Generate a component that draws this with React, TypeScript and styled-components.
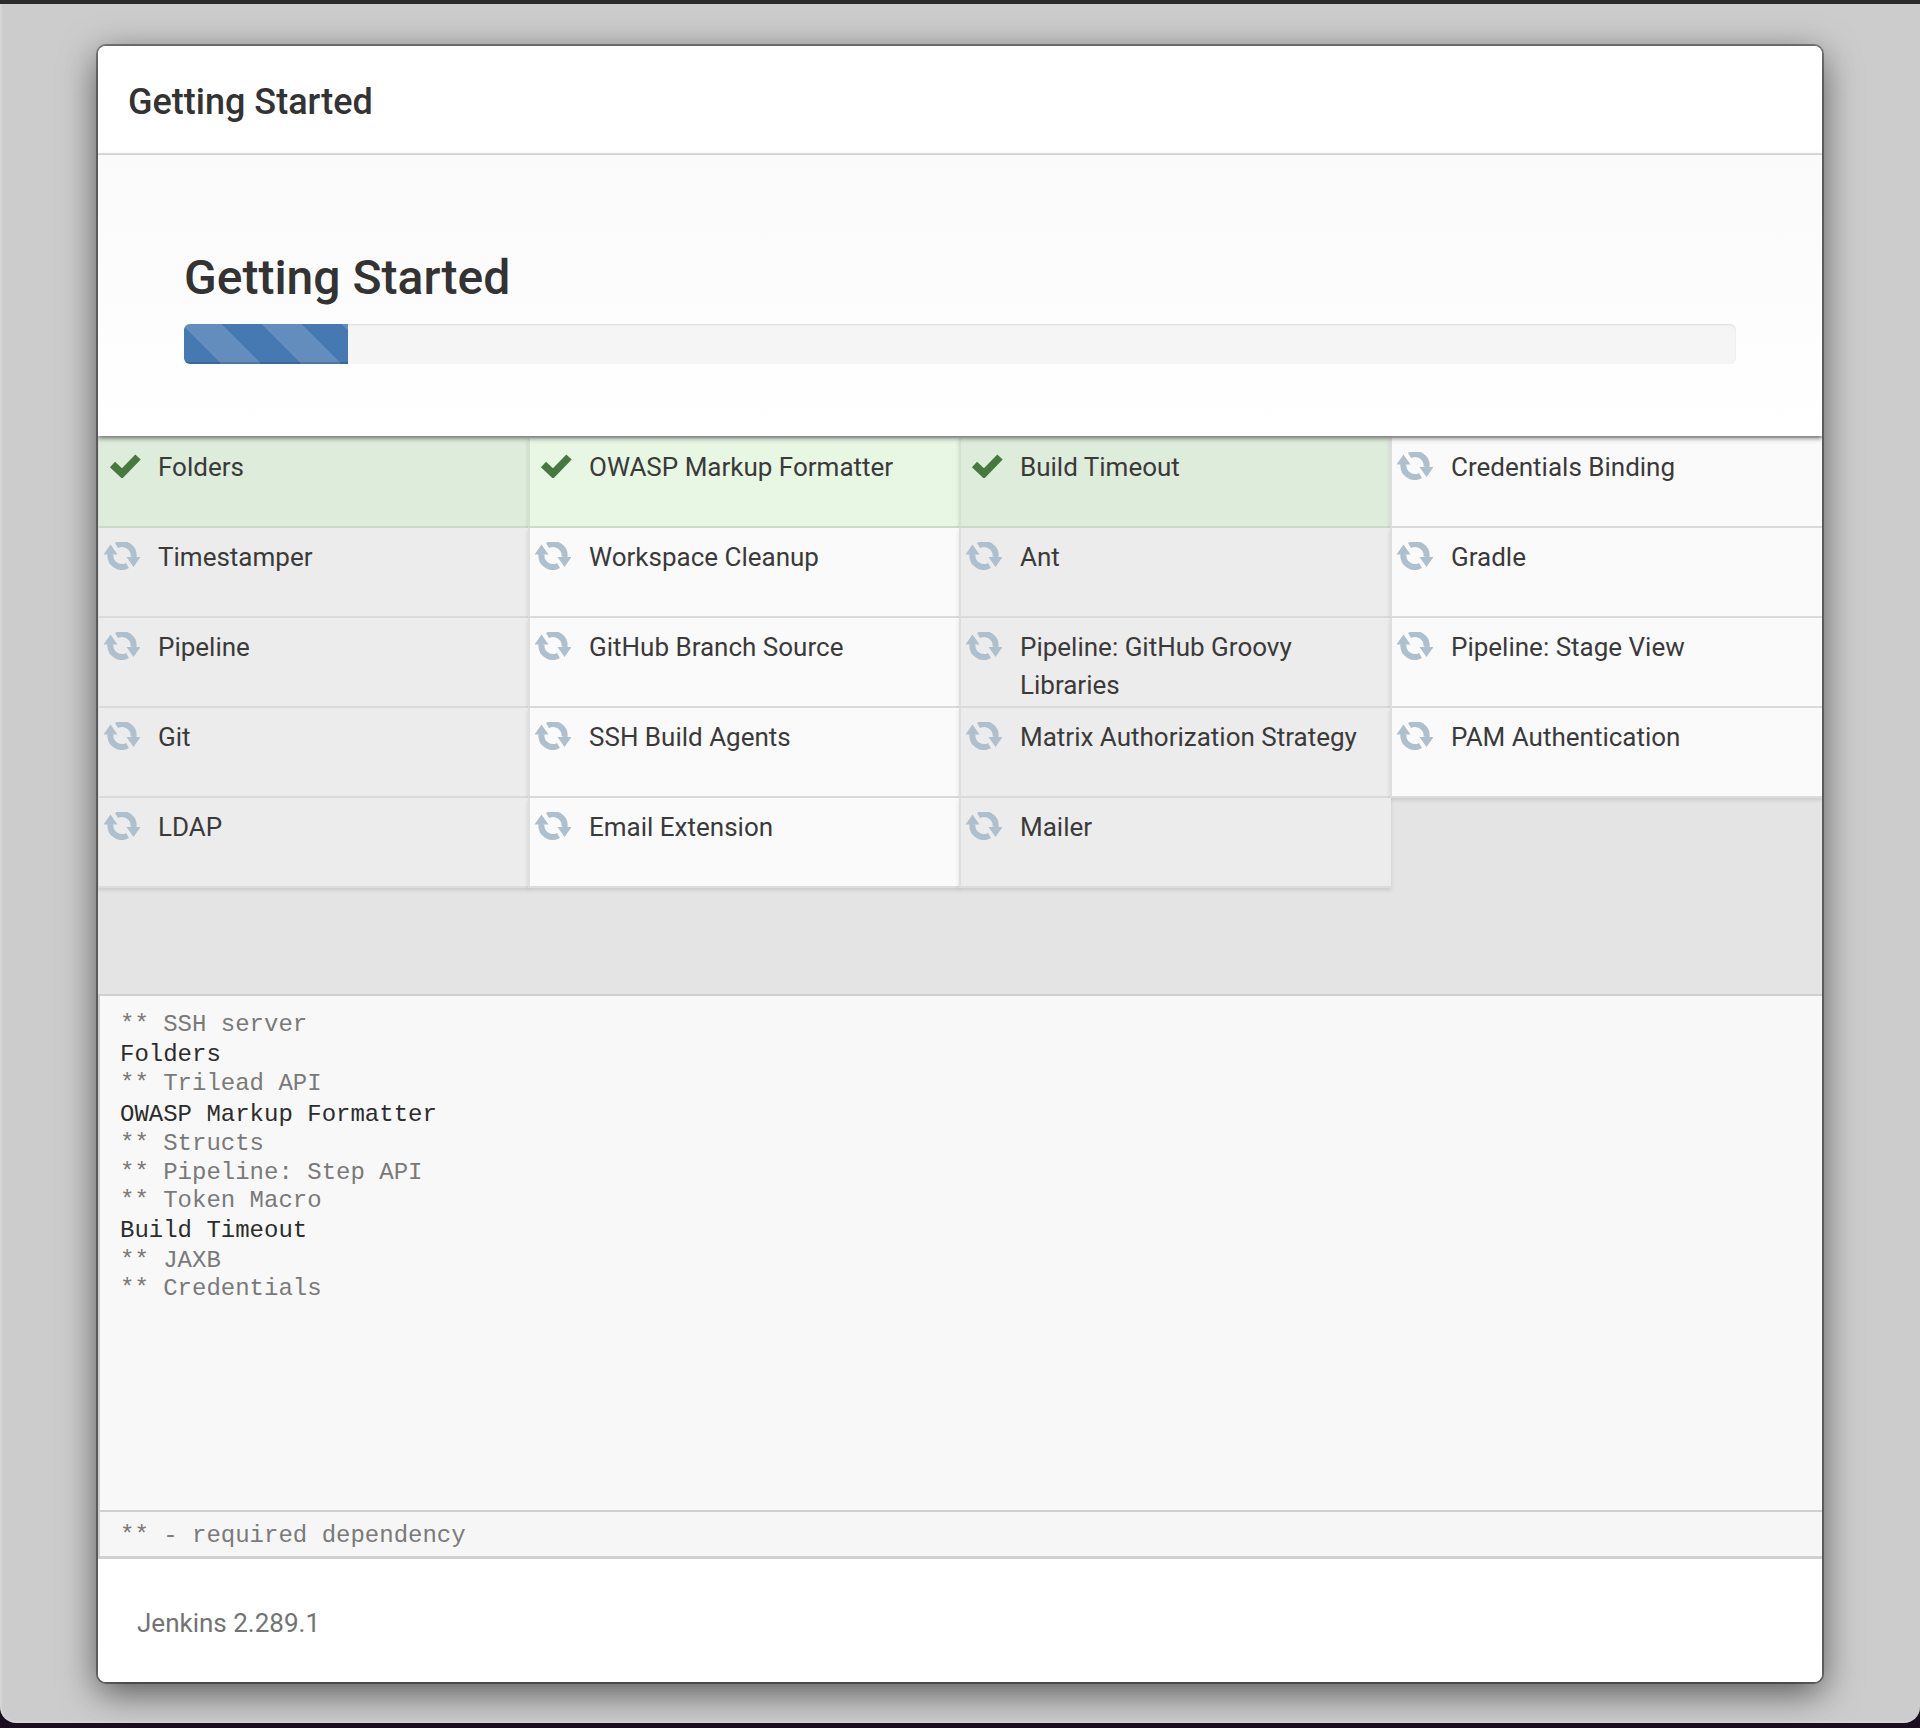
import React from 'react'
import styled, { createGlobalStyle } from 'styled-components'

type PluginState = 'done' | 'pending'

type Plugin = {
  name: string
  state: PluginState
}

const plugins: Plugin[] = [
  { name: 'Folders', state: 'done' },
  { name: 'OWASP Markup Formatter', state: 'done' },
  { name: 'Build Timeout', state: 'done' },
  { name: 'Credentials Binding', state: 'pending' },
  { name: 'Timestamper', state: 'pending' },
  { name: 'Workspace Cleanup', state: 'pending' },
  { name: 'Ant', state: 'pending' },
  { name: 'Gradle', state: 'pending' },
  { name: 'Pipeline', state: 'pending' },
  { name: 'GitHub Branch Source', state: 'pending' },
  { name: 'Pipeline: GitHub Groovy Libraries', state: 'pending' },
  { name: 'Pipeline: Stage View', state: 'pending' },
  { name: 'Git', state: 'pending' },
  { name: 'SSH Build Agents', state: 'pending' },
  { name: 'Matrix Authorization Strategy', state: 'pending' },
  { name: 'PAM Authentication', state: 'pending' },
  { name: 'LDAP', state: 'pending' },
  { name: 'Email Extension', state: 'pending' },
  { name: 'Mailer', state: 'pending' },
]

const logLines = [
  '** SSH server',
  'Folders',
  '** Trilead API',
  'OWASP Markup Formatter',
  '** Structs',
  '** Pipeline: Step API',
  '** Token Macro',
  'Build Timeout',
  '** JAXB',
  '** Credentials',
]

const GlobalStyle = createGlobalStyle`
  html, body {
    margin: 0;
    padding: 0;
    background: #1a0f20;
  }
  * {
    box-sizing: border-box;
  }
`

const cellBackground = (state: PluginState, index: number) => {
  const odd = index % 2 === 1
  if (state === 'done') return odd ? '#e8f6e4' : '#deecdb'
  return odd ? '#fafafa' : '#ececec'
}

const Page = styled.div`
  height: 1728px;
  display: flex;
  flex-direction: column;
  font-family: Roboto, 'Liberation Sans', sans-serif;
  color: #333;
`

const TopBar = styled.div`
  height: 4px;
  flex: none;
  background: #2b2b2b;
`

const Backdrop = styled.div`
  height: 1719px;
  flex: none;
  padding: 42px 98px 0 96px;
  background: #cccccc;
  border-left: 2px solid #d6d6d6;
  border-bottom: 2px solid #d4d4d4;
  border-radius: 0 0 16px 16px;
`

const Modal = styled.div`
  height: 1636px;
  display: flex;
  flex-direction: column;
  overflow: hidden;
  background: #fff;
  border-radius: 8px;
  box-shadow: 0 0 0 2px rgba(0, 0, 0, 0.38), 0 10px 36px rgba(0, 0, 0, 0.6);
`

const ModalHeader = styled.header`
  height: 109px;
  flex: none;
  display: flex;
  align-items: center;
  padding: 6px 30px 0;
  background: #fff;
  border-bottom: 2px solid #e6e6e6;
`

const ModalTitle = styled.h4`
  margin: 0;
  font-size: 36px;
  font-weight: 500;
  line-height: 1.2;
`

const Body = styled.div`
  flex: 1;
  display: flex;
  flex-direction: column;
  min-height: 0;
`

const ProgressSection = styled.section`
  position: relative;
  z-index: 2;
  height: 281px;
  flex: none;
  padding: 93px 86px 0;
  background: linear-gradient(#fafafa, #ffffff);
  box-shadow: 0 2px 5px rgba(0, 0, 0, 0.55);
`

const Heading = styled.h1`
  margin: 0 0 17px;
  font-size: 48px;
  font-weight: 500;
  line-height: 59px;
`

const ProgressTrack = styled.div`
  height: 40px;
  overflow: hidden;
  background: #f5f5f5;
  border-radius: 6px;
  box-shadow: inset 0 1px 2px rgba(0, 0, 0, 0.1);
`

const ProgressBar = styled.div`
  height: 100%;
  background-color: #4679b2;
  background-image: linear-gradient(
    45deg,
    rgba(255, 255, 255, 0.15) 25%,
    transparent 25%,
    transparent 50%,
    rgba(255, 255, 255, 0.15) 50%,
    rgba(255, 255, 255, 0.15) 75%,
    transparent 75%,
    transparent
  );
  background-size: 80px 80px;
  background-position: -2px 0;
  box-shadow: inset 0 -2px 0 rgba(0, 0, 0, 0.15);
`

const InstallArea = styled.section`
  height: 558px;
  flex: none;
  background: #e4e4e4;
`

const PluginGrid = styled.div`
  display: grid;
  grid-template-columns: repeat(4, 1fr);
  grid-auto-rows: 90px;
  padding-top: 2px;
`

const Cell = styled.div<{ $state: PluginState; $index: number }>`
  display: flex;
  margin-left: -1px;
  padding-top: 10px;
  font-size: 26px;
  line-height: 38px;
  color: #3a3a3a;
  background: ${(p) => cellBackground(p.$state, p.$index)};
  border-bottom: 2px solid ${(p) => (p.$state === 'done' ? '#cddccb' : '#dcdcdc')};
  border-left: 2px solid ${(p) => (p.$state === 'done' ? '#d3e2d0' : '#dedede')};
  box-shadow: 0 2px 4px rgba(0, 0, 0, 0.12);
`

const IconSlot = styled.div`
  width: 59px;
  flex: none;
  padding-left: 4px;
  color: #aebfce;
`

const CheckSlot = styled(IconSlot)`
  padding-left: 10px;
  color: #47783f;
`

const CellName = styled.span`
  display: block;
`

const LogPane = styled.section`
  height: 516px;
  flex: none;
  padding: 14.5px 20px 0;
  background: #f8f8f8;
  border-top: 2px solid #cfcfcf;
  border-left: 2px solid #d0d0d0;
  font-family: 'Liberation Mono', monospace;
  font-size: 24px;
`

const DepLine = styled.div`
  height: 28.3px;
  line-height: 28.3px;
  color: #7a7a7a;
`

const PluginLine = styled.div`
  height: 31.7px;
  line-height: 31.7px;
  color: #2c2c2c;
`

const Legend = styled.section`
  height: 49px;
  flex: none;
  display: flex;
  align-items: center;
  padding: 2px 20px 0;
  background: #f6f6f6;
  border-top: 2px solid #cfcfcf;
  border-bottom: 3px solid #d0d0d0;
  border-left: 2px solid #d0d0d0;
  font-family: 'Liberation Mono', monospace;
  font-size: 24px;
  color: #7a7a7a;
`

const ModalFooter = styled.footer`
  flex: 1;
  display: flex;
  align-items: center;
  padding: 5px 39px 0;
  background: #fff;
  font-size: 26px;
  color: #737373;
`

const CheckIcon = () => (
  <svg width="33" height="26" viewBox="0 0 33 26" style={{ display: 'block', marginTop: 4 }}>
    <path d="M3.5 12.5l9.5 9L29 5" fill="none" stroke="currentColor" strokeWidth="7.5" />
  </svg>
)

const RefreshIcon = () => (
  <svg width="37" height="28" viewBox="0 0 37 28" style={{ display: 'block', marginTop: 4 }}>
    <g fill="none" stroke="currentColor" strokeWidth="6">
      <path d="M13.5 3.5a11.5 11.5 0 0 1 17 11.5" />
      <path d="M24.5 23.5A11.5 11.5 0 0 1 7.5 12" />
    </g>
    <path d="M23.5 15h14l-7 10zM.5 12.5h14l-7-10z" fill="currentColor" />
  </svg>
)

export default function App() {
  return (
    <>
      <GlobalStyle />
      <Page>
        <TopBar />
        <Backdrop>
          <Modal>
            <ModalHeader>
              <ModalTitle>Getting Started</ModalTitle>
            </ModalHeader>
            <Body>
              <ProgressSection>
                <Heading>Getting Started</Heading>
                <ProgressTrack>
                  <ProgressBar style={{ width: `${(3 / 19) * 100 * 0.668}%` }} />
                </ProgressTrack>
              </ProgressSection>
              <InstallArea>
                <PluginGrid>
                  {plugins.map((plugin, i) => (
                    <Cell key={plugin.name} $state={plugin.state} $index={i}>
                      {plugin.state === 'done' ? (
                        <CheckSlot>
                          <CheckIcon />
                        </CheckSlot>
                      ) : (
                        <IconSlot>
                          <RefreshIcon />
                        </IconSlot>
                      )}
                      <CellName>{plugin.name}</CellName>
                    </Cell>
                  ))}
                </PluginGrid>
              </InstallArea>
              <LogPane>
                {logLines.map((line) =>
                  line.startsWith('**') ? <DepLine key={line}>{line}</DepLine> : <PluginLine key={line}>{line}</PluginLine>,
                )}
              </LogPane>
              <Legend>** - required dependency</Legend>
              <ModalFooter>Jenkins 2.289.1</ModalFooter>
            </Body>
          </Modal>
        </Backdrop>
      </Page>
    </>
  )
}
